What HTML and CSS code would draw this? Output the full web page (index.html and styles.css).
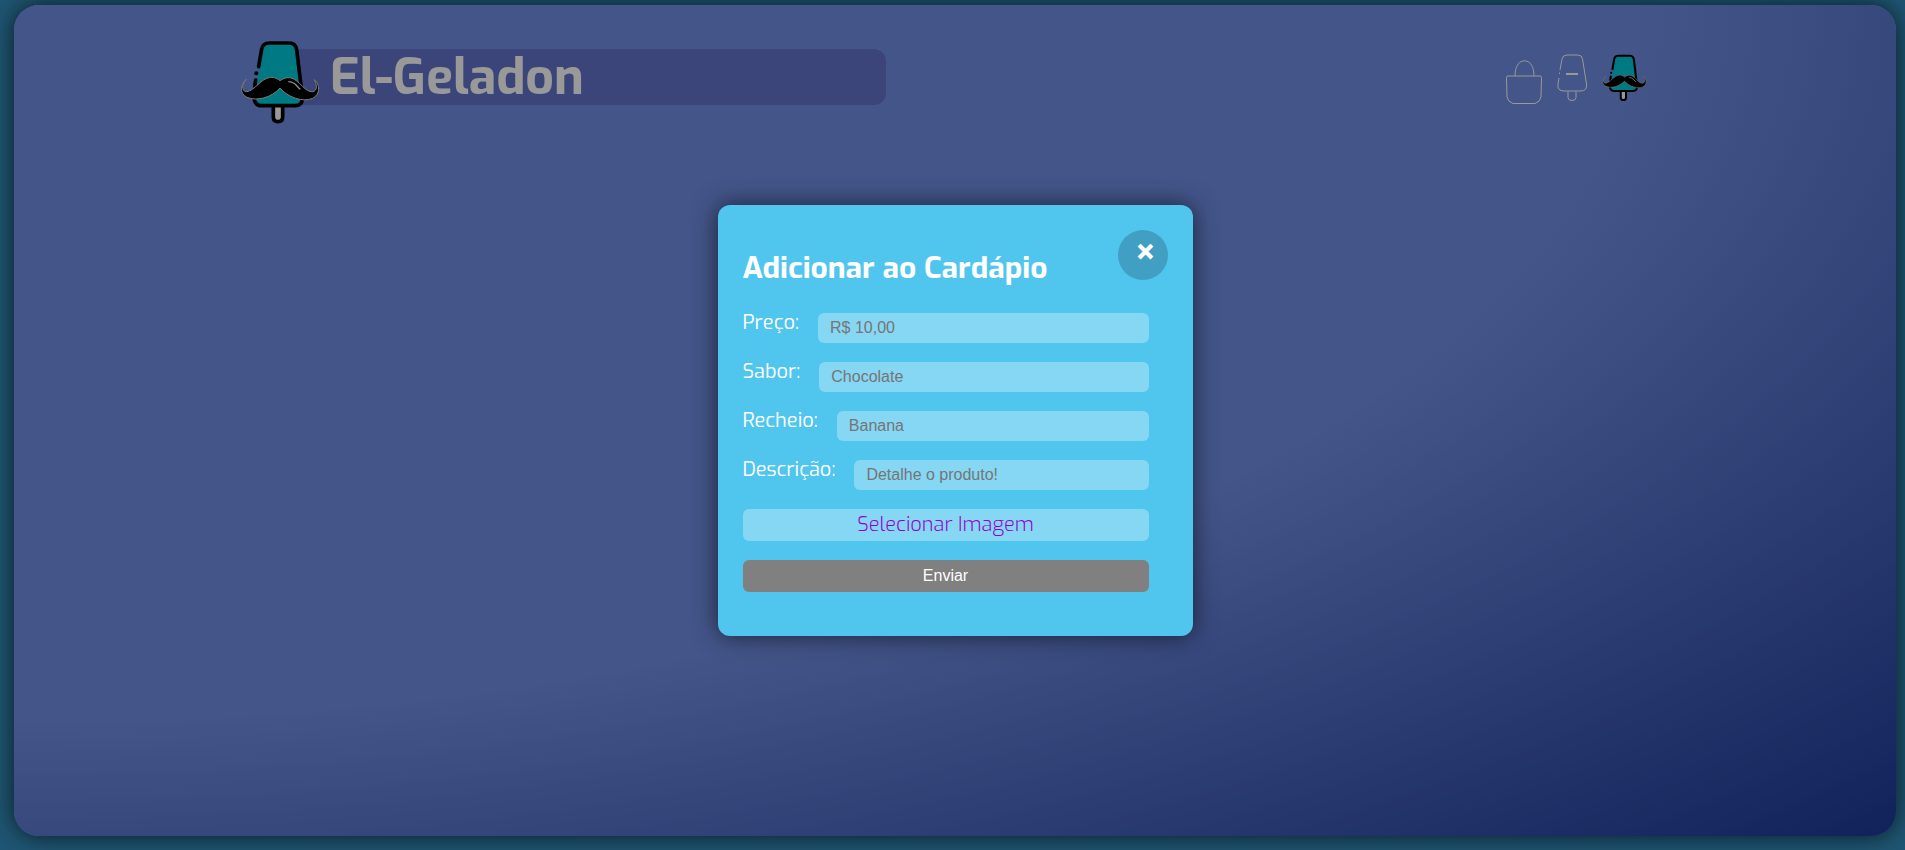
FILE: index.html
```html
<!DOCTYPE html>
<html lang="pt-BR">
<head>
<meta charset="utf-8">
<title>El-Geladon</title>
<link rel="stylesheet" href="styles.css">
</head>
<body>
<svg class="defs" aria-hidden="true">
  <symbol id="mustache-pop" viewBox="15 12 240 255">
    <path d="M115 205v38q0 14 14 14t14-14v-38z" fill="#fff" stroke="#000" stroke-width="11"/>
    <path d="M86 40q3-20 22-20h54q19 0 22 20l18 142q2 26-22 26H80q-24 0-22-26z" fill="#00cbd9"/>
    <path d="M71 92l9-53q3-18 24-18h58q20 0 23 20l17 140q2 28-22 28H80q-20 0-23-22M62 132l-3 20" fill="none" stroke="#000" stroke-width="11" stroke-linecap="round"/>
    <circle cx="64" cy="112" r="6"/>
    <path d="M34 130c-18 14-22 42 2 54 30 12 72 2 99-28 22 27 68 44 98 31 24-12 22-42 5-56 12 22 6 38-10 36-26-4-40-46-72-42-8 1-15 5-21 9-7-6-17-11-28-10-30 3-48 40-71 43-16 1-18-20-2-37z" fill="#000" stroke="#ccc" stroke-width="3" stroke-linejoin="round"/>
    <path d="M160 137q15 0 26 13 6 7 10 10" fill="none" stroke="#eee" stroke-width="4"/>
  </symbol>
</svg>
<div class="page">
  <header class="header">
    <div class="brand">
      <svg class="brand-logo" role="img" aria-label="Picolé com bigode"><use href="#mustache-pop"/></svg>
      <h1 class="brand-name">El-Geladon</h1>
    </div>
    <nav class="actions" aria-label="Menu">
      <button class="action" type="button" aria-label="Sacola">
        <svg class="icon icon-bag" viewBox="0 0 36 44"><path d="M2 16h32q1.500 0 1.500 1.500L35 37q-1 5-6 6.500H7q-5-1.500-6-6.500L.5 17.500Q.5 16 2 16zM9 16C9 8 12 .8 18.500 .8S28 8 28 16"/></svg>
      </button>
      <button class="action" type="button" aria-label="Adicionar picolé">
        <svg class="icon icon-pop" viewBox="0 0 32 48"><path d="M4 16L6 5q.7-4 5-4h11q4 0 4.500 4l4 25q.7 7-5.500 7H8q-7 0-6-7l1-6M3.500 18.500v1.500M12 37.500v6q0 3 4 3t4-3v-6"/><path class="minus" d="M10 20h12"/></svg>
      </button>
      <button class="action" type="button" aria-label="El-Geladon">
        <svg class="icon icon-mustache"><use href="#mustache-pop"/></svg>
      </button>
    </nav>
  </header>
  <div class="overlay">
    <section class="modal" role="dialog" aria-modal="true" aria-labelledby="modal-title">
      <div class="modal-head">
        <h2 class="modal-title" id="modal-title">Adicionar ao Cardápio</h2>
        <button class="close" type="button" aria-label="Fechar">×</button>
      </div>
      <form class="form">
        <div class="field"><label for="preco">Preço:</label><input id="preco" type="text" placeholder="R$ 10,00"></div>
        <div class="field"><label for="sabor">Sabor:</label><input id="sabor" type="text" placeholder="Chocolate"></div>
        <div class="field"><label for="recheio">Recheio:</label><input id="recheio" type="text" placeholder="Banana"></div>
        <div class="field"><label for="descricao">Descrição:</label><input id="descricao" type="text" placeholder="Detalhe o produto!"></div>
        <label class="upload" for="foto">Selecionar Imagem</label>
        <input class="file" id="foto" type="file">
        <button class="submit" type="button">Enviar</button>
      </form>
    </section>
  </div>
</div>
</body>
</html>
```
FILE: styles.css
```css
* {
  box-sizing: border-box;
}

body {
  margin: 0;
  min-height: 100vh;
  display: flex;
  padding: 5px 9px 14px 14px;
  background: #1f5673;
  font-family: Exo, "Exo 2", Roboto, sans-serif;
}

.defs {
  position: absolute;
  width: 0;
  height: 0;
}

.page {
  position: relative;
  flex: 1;
  border-radius: 25px;
  background: radial-gradient(ellipse at top left, #718ee4 61%, #1d3896 100%);
  box-shadow: 0 0 25px rgba(0, 0, 0, 0.7);
}

.header {
  display: flex;
  justify-content: space-between;
  align-items: flex-start;
  padding: 34px 249px 0 12%;
}

.brand {
  display: flex;
  align-items: center;
  flex: 0 1 646px;
  height: 86px;
}

.brand-logo {
  position: relative;
  z-index: 1;
  flex: none;
  width: 80px;
  height: 85px;
}

.brand-name {
  flex: 1;
  margin: 0 0 10px -38px;
  padding: 0 0 0 48px;
  border-radius: 12px;
  background: #6573ca;
  color: #fff;
  font-size: 50px;
  line-height: 56px;
  font-weight: 700;
}

.actions {
  display: flex;
  align-items: flex-start;
  gap: 14px;
  padding-top: 15px;
}

.action {
  display: block;
  padding: 0;
  border: 0;
  background: none;
  cursor: pointer;
}

.icon {
  display: block;
  height: 48px;
  fill: none;
  stroke: #fff;
  stroke-width: 1;
}

.icon-bag {
  width: 36px;
  height: 44px;
  margin-top: 6px;
}

.icon-pop {
  width: 32px;
}

.minus {
  stroke-width: 2;
}

.icon-mustache {
  width: 45px;
  stroke: none;
  fill: #000;
}

.overlay {
  position: absolute;
  inset: 0;
  z-index: 2;
  display: flex;
  align-items: center;
  justify-content: center;
  border-radius: 25px;
  background: rgba(0, 0, 0, 0.4);
}

.modal {
  width: 475px;
  padding: 25px 25px 44px;
  border-radius: 12px;
  background: #50c5ee;
  box-shadow: 0 0 25px rgba(0, 0, 0, 0.6);
  color: #fff;
}

.modal-head {
  display: flex;
  justify-content: space-between;
  align-items: flex-start;
}

.modal-title {
  margin: 18px 0 0;
  font-size: 30px;
  line-height: 40px;
}

.close {
  width: 50px;
  height: 50px;
  padding: 0 0 4px 6px;
  border: 0;
  border-radius: 50%;
  background: #409fc2;
  color: #fff;
  font: 600 40px/40px Exo, "Exo 2", Roboto, sans-serif;
  cursor: pointer;
}

.form {
  display: flex;
  flex-direction: column;
  gap: 19px;
  width: 406px;
  margin-top: 25px;
}

.field {
  display: flex;
  gap: 19px;
}

.field label {
  font-size: 20px;
  line-height: 20px;
}

.field input {
  flex: 1;
  min-width: 0;
  height: 30px;
  padding: 0 12px 1px;
  border: 0;
  border-radius: 6px;
  background: #86d7f4;
  color: #757575;
  font: 16px "Liberation Sans", sans-serif;
}

.field input::placeholder {
  color: #757575;
}

.upload {
  border-radius: 6px;
  background: #86d7f4;
  color: #9400d3;
  font-size: 20px;
  line-height: 32px;
  font-weight: 300;
  text-align: center;
  cursor: pointer;
}

.file {
  display: none;
}

.submit {
  height: 32px;
  padding: 0;
  border: 0;
  border-radius: 6px;
  background: #808080;
  color: #fff;
  font: 16px "Liberation Sans", sans-serif;
  cursor: pointer;
}
```
